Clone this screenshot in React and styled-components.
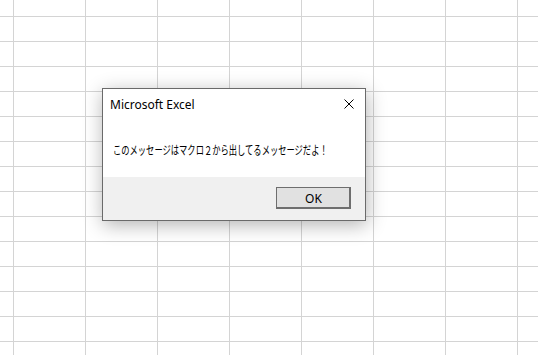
import React from 'react'
import styled, { createGlobalStyle } from 'styled-components'

const GlobalStyle = createGlobalStyle`
  html, body {
    margin: 0;
    padding: 0;
    background: #ffffff;
  }
  body {
    font-family: "Noto Sans", "Noto Sans CJK JP", sans-serif;
  }
`

const COLS = 8
const ROWS = 15

const App = () =>
  <Screen>
    <GlobalStyle />
    <Sheet>
      {Array.from({ length: ROWS * (COLS + 1) }).map((_, i) =>
        <Cell key={i} />
      )}
    </Sheet>
    <Dialog role="dialog">
      <TitleBar>
        <Title>Microsoft Excel</Title>
        <CloseButton aria-label="閉じる">
          <svg width="10" height="10" viewBox="0 0 10 10">
            <path d="M0.5 0.5 L9.5 9.5 M9.5 0.5 L0.5 9.5" stroke="#000" strokeWidth="1" fill="none" />
          </svg>
        </CloseButton>
      </TitleBar>
      <Body>
        <Message>このメッセージはマクロ２から出してるメッセージだよ！</Message>
      </Body>
      <Footer>
        <OkButton>OK</OkButton>
      </Footer>
    </Dialog>
  </Screen>

const Screen = styled.div`
  position: relative;
  width: 538px;
  height: 355px;
  overflow: hidden;
  background: #ffffff;
`

const Sheet = styled.div`
  display: grid;
  grid-template-columns: 14px repeat(${COLS}, 72px);
  grid-template-rows: 17px repeat(${ROWS - 1}, 25px);
`

const Cell = styled.div`
  box-sizing: border-box;
  border-right: 1px solid #d4d4d4;
  border-bottom: 1px solid #d4d4d4;
`

const Dialog = styled.div`
  position: absolute;
  left: 102px;
  top: 88px;
  width: 264px;
  height: 133px;
  box-sizing: border-box;
  display: flex;
  flex-direction: column;
  background: #ffffff;
  border: 1px solid #6a6a6a;
  box-shadow: 1px 4px 18px rgba(0, 0, 0, 0.3);
`

const TitleBar = styled.div`
  height: 29px;
  display: flex;
  align-items: center;
  justify-content: space-between;
  padding: 0 11px 0 7px;
`

const Title = styled.span`
  font-family: "Segoe UI", "Noto Sans", sans-serif;
  font-size: 12px;
  color: #000000;
  padding-top: 1px;
`

const CloseButton = styled.span`
  display: flex;
  width: 10px;
  height: 10px;
  margin-top: 1px;
`

const Body = styled.div`
  flex: 1;
  display: flex;
  align-items: center;
  padding: 4px 0 0 10px;
`

const Message = styled.span`
  display: inline-block;
  font-family: "Meiryo UI", "Noto Sans CJK JP", sans-serif;
  font-size: 12px;
  color: #000000;
  white-space: nowrap;
  transform: scaleX(0.69);
  transform-origin: left center;
`

const Footer = styled.div`
  height: 43px;
  display: flex;
  justify-content: flex-end;
  align-items: flex-start;
  padding: 10px 14px 0 0;
  box-sizing: border-box;
  background: #f0f0f0;
`

const OkButton = styled.button`
  width: 75px;
  height: 22px;
  box-sizing: border-box;
  padding: 0;
  margin: 0;
  font-family: "Segoe UI", "Noto Sans", sans-serif;
  font-size: 12px;
  color: #000000;
  background: #e1e1e1;
  border: 1px solid #6e6e6e;
  box-shadow: inset -1px -1px 0 #6e6e6e;
`

export default App
